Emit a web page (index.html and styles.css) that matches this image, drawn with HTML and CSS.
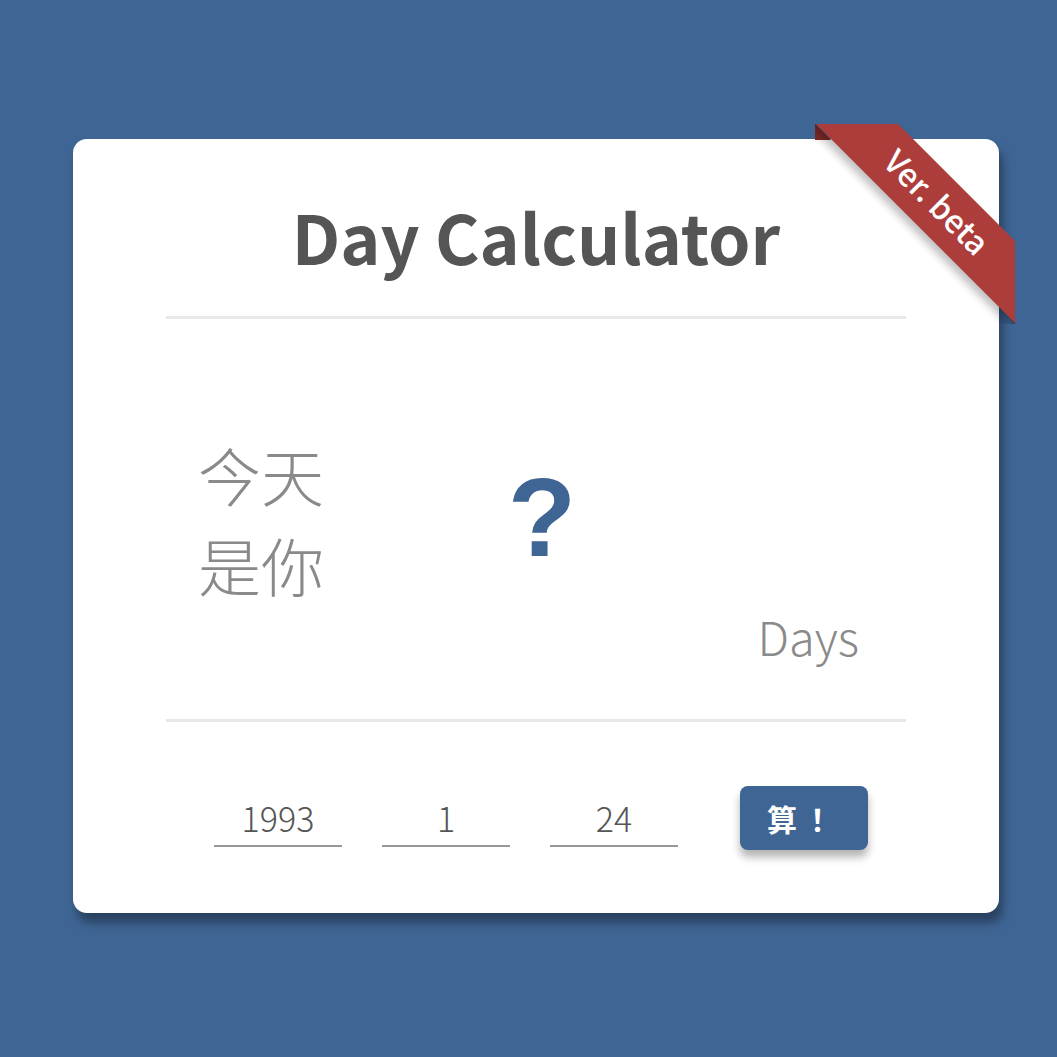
FILE: index.html
```html
<!DOCTYPE html>
<html lang="zh">
<head>
<meta charset="utf-8">
<title>Day Calculator</title>
<link rel="stylesheet" href="styles.css">
</head>
<body>
<div class="page">
  <div class="card">
    <div class="ribbon"><div class="ribbon-band">Ver. beta</div></div>
    <h1 class="title">Day Calculator</h1>
    <div class="divider"></div>
    <div class="result">
      <div class="label">今天<br>是你</div>
      <div class="count">?</div>
      <div class="unit">Days</div>
    </div>
    <div class="divider"></div>
    <div class="form">
      <div class="field">1993</div>
      <div class="field">1</div>
      <div class="field">24</div>
      <button class="calc">算！</button>
    </div>
  </div>
</div>
</body>
</html>
```

FILE: styles.css
```css
html, body {
  margin: 0;
  padding: 0;
  background: #3f6594;
  font-family: "Noto Sans CJK SC", "Noto Sans", sans-serif;
}
.page {
  width: 1057px;
  height: 1057px;
  box-sizing: border-box;
  padding: 139px 0 0 73px;
}
.card {
  position: relative;
  width: 926px;
  height: 774px;
  box-sizing: border-box;
  padding: 0 93px;
  background: #fff;
  border-radius: 14px;
  box-shadow: 4px 10px 10px rgba(0, 0, 0, 0.35);
  display: flex;
  flex-direction: column;
}
.title {
  margin: 0;
  height: 177px;
  box-sizing: border-box;
  padding-top: 52px;
  text-align: center;
  font-size: 68px;
  line-height: 90px;
  font-weight: 700;
  color: #555;
}
.divider {
  height: 3px;
  background: #e8e8e8;
}
.result {
  height: 400px;
  display: flex;
  position: relative;
}
.label {
  width: 200px;
  padding: 110px 0 0 32px;
  font-size: 63px;
  line-height: 90px;
  font-weight: 300;
  color: #8a8a8a;
}
.count {
  width: 288px;
  padding-top: 144px;
  text-align: center;
  font-family: "Liberation Sans", Arial, sans-serif;
  font-size: 112px;
  line-height: 110px;
  font-weight: 700;
  color: #3f6594;
}
.unit {
  flex: 1;
  padding: 287px 47px 0 0;
  text-align: right;
  font-size: 47px;
  line-height: 60px;
  font-weight: 300;
  color: #8a8a8a;
}
.form {
  display: flex;
  align-items: flex-start;
  padding: 64px 0 0 48px;
}
.field {
  width: 128px;
  margin: 5px 40px 0 0;
  border-bottom: 2px solid #999;
  text-align: center;
  font-size: 34px;
  line-height: 46px;
  font-weight: 300;
  color: #555;
  height: 56px;
  box-sizing: border-box;
  padding-top: 4px;
}
.field:nth-child(3) {
  margin-right: 62px;
}
.calc {
  width: 128px;
  height: 64px;
  padding: 0 0 0 12px;
  border: none;
  border-radius: 8px;
  background: #3f6594;
  color: #fff;
  font-family: "Noto Sans CJK SC", sans-serif;
  font-size: 30px;
  font-weight: 700;
  letter-spacing: 13px;
  box-shadow: 0 7px 8px rgba(0, 0, 0, 0.3);
}
.ribbon {
  position: absolute;
  top: -15px;
  right: -16px;
  width: 200px;
  height: 200px;
  overflow: hidden;
}
.ribbon::before,
.ribbon::after {
  content: "";
  position: absolute;
  background: #7f2a27;
}
.ribbon::before {
  left: 0;
  top: 0;
  width: 16px;
  height: 16px;
  clip-path: polygon(0 0, 100% 100%, 0 100%);
}
.ribbon::after {
  right: 0;
  bottom: 0;
  width: 17px;
  height: 20px;
  clip-path: polygon(0 0, 100% 0, 100% 100%);
}
.ribbon-band {
  position: absolute;
  left: -29px;
  top: 50px;
  width: 300px;
  height: 58px;
  box-sizing: border-box;
  padding-bottom: 6px;
  transform: rotate(45deg);
  background: #ad3d3a;
  color: #fff;
  text-align: center;
  font-size: 32px;
  font-weight: 500;
  line-height: 52px;
  box-shadow: 0 6px 8px rgba(0, 0, 0, 0.25);
  z-index: 1;
}
```
